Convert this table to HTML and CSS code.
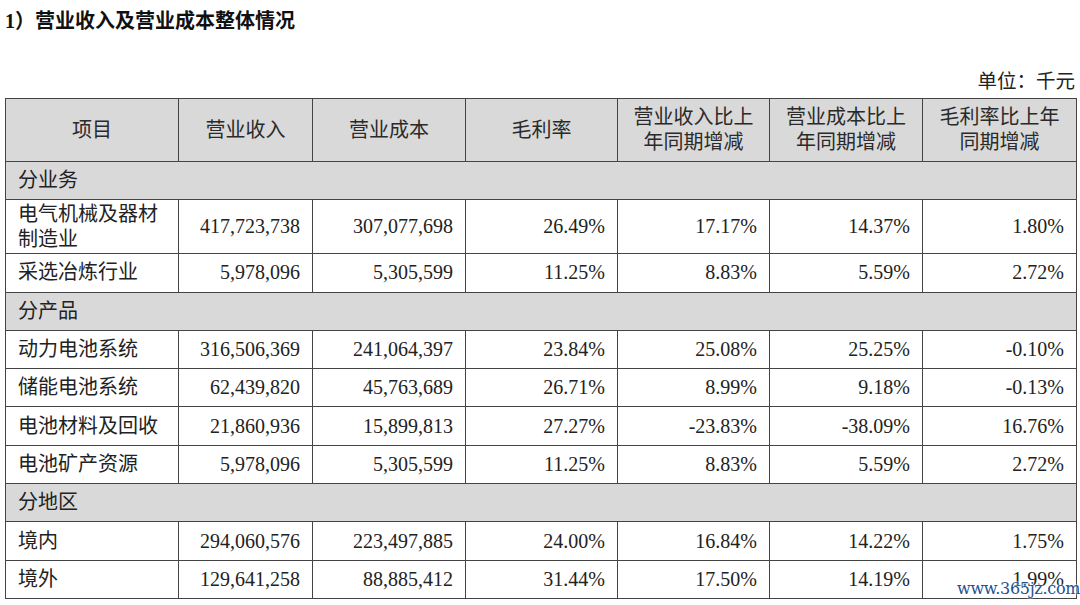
FILE: index.html
```html
<!DOCTYPE html>
<html lang="zh-CN">
<head>
<meta charset="utf-8">
<title>营业收入及营业成本整体情况</title>
<link rel="stylesheet" href="styles.css">
</head>
<body>
<div class="page">
  <h1 class="title">1）营业收入及营业成本整体情况</h1>
  <div class="unit">单位：千元</div>
  <table class="tbl">
    <colgroup>
      <col class="c1"><col class="c2"><col class="c3"><col class="c4"><col class="c5"><col class="c6"><col class="c7">
    </colgroup>
    <thead>
      <tr class="head">
        <th>项目</th>
        <th>营业收入</th>
        <th>营业成本</th>
        <th>毛利率</th>
        <th>营业收入比上<br>年同期增减</th>
        <th>营业成本比上<br>年同期增减</th>
        <th>毛利率比上年<br>同期增减</th>
      </tr>
    </thead>
    <tbody>
      <tr class="sec"><td colspan="7">分业务</td></tr>
      <tr class="dbl"><td class="lbl">电气机械及器材<br>制造业</td><td>417,723,738</td><td>307,077,698</td><td>26.49%</td><td>17.17%</td><td>14.37%</td><td>1.80%</td></tr>
      <tr><td class="lbl">采选冶炼行业</td><td>5,978,096</td><td>5,305,599</td><td>11.25%</td><td>8.83%</td><td>5.59%</td><td>2.72%</td></tr>
      <tr class="sec"><td colspan="7">分产品</td></tr>
      <tr><td class="lbl">动力电池系统</td><td>316,506,369</td><td>241,064,397</td><td>23.84%</td><td>25.08%</td><td>25.25%</td><td>-0.10%</td></tr>
      <tr><td class="lbl">储能电池系统</td><td>62,439,820</td><td>45,763,689</td><td>26.71%</td><td>8.99%</td><td>9.18%</td><td>-0.13%</td></tr>
      <tr><td class="lbl">电池材料及回收</td><td>21,860,936</td><td>15,899,813</td><td>27.27%</td><td>-23.83%</td><td>-38.09%</td><td>16.76%</td></tr>
      <tr><td class="lbl">电池矿产资源</td><td>5,978,096</td><td>5,305,599</td><td>11.25%</td><td>8.83%</td><td>5.59%</td><td>2.72%</td></tr>
      <tr class="sec"><td colspan="7">分地区</td></tr>
      <tr><td class="lbl">境内</td><td>294,060,576</td><td>223,497,885</td><td>24.00%</td><td>16.84%</td><td>14.22%</td><td>1.75%</td></tr>
      <tr><td class="lbl">境外</td><td>129,641,258</td><td>88,885,412</td><td>31.44%</td><td>17.50%</td><td>14.19%</td><td>1.99%</td></tr>
    </tbody>
  </table>
  <div class="watermark">www.365jz.com</div>
</div>
</body>
</html>
```

FILE: styles.css
```css
html, body {
  margin: 0;
  padding: 0;
  background: #ffffff;
}
body {
  font-family: "Liberation Serif", "Noto Sans CJK SC", serif;
  color: #222222;
}
.page {
  position: relative;
  width: 1080px;
  height: 605px;
  overflow: hidden;
}
.title {
  margin: 0;
  padding: 9px 0 0 5px;
  font-size: 20px;
  line-height: 24px;
  font-weight: bold;
  color: #111111;
}
.unit {
  margin-top: 37px;
  padding-right: 5px;
  text-align: right;
  font-size: 19.5px;
  line-height: 24px;
}
.tbl {
  margin: 4px 0 0 5px;
  width: 1071px;
  table-layout: fixed;
  border-collapse: collapse;
  font-size: 20px;
}
.c1 { width: 173px; }
.c2 { width: 134px; }
.c3 { width: 153px; }
.c4 { width: 152px; }
.c5 { width: 152px; }
.c6 { width: 153px; }
.c7 { width: 154px; }
.tbl th,
.tbl td {
  border: 1px solid #444444;
  padding: 0 12px;
  line-height: 25px;
  vertical-align: middle;
}
.head {
  height: 63px;
}
.head th {
  background: #d9d9d9;
  font-weight: normal;
  text-align: center;
  color: #2a2a2a;
}
.tbl tbody tr {
  height: 38.3px;
}
.tbl tbody tr.dbl {
  height: 54px;
}
.tbl td {
  text-align: right;
}
.tbl td.lbl {
  text-align: left;
}
.sec td {
  background: #d9d9d9;
  text-align: left;
}
.watermark {
  position: absolute;
  left: 957px;
  top: 579px;
  font-family: "DejaVu Serif", serif;
  font-size: 16px;
  line-height: 20px;
  color: #23508f;
  text-shadow: 0 0 2px #ffffff, 0 0 2px #ffffff;
  letter-spacing: -0.3px;
}
```
